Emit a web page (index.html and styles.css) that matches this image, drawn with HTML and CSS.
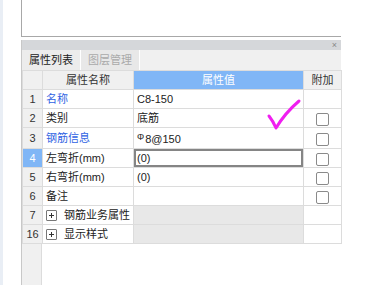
FILE: index.html
```html
<!DOCTYPE html>
<html lang="zh-CN">
<head>
    <meta charset="UTF-8">
    <title>属性列表</title>
    <link rel="stylesheet" href="styles.css">
</head>
<body>
<div class="page">
    <div class="strip"></div>
    <div class="main">
        <div class="top-panel"></div>
        <div class="dock">
            <div class="dock-title"><span class="close">×</span></div>
            <div class="tabs">
                <div class="tab active">属性列表</div>
                <div class="tab">图层管理</div>
            </div>
            <table class="grid">
                <colgroup>
                    <col class="c-num">
                    <col class="c-name">
                    <col class="c-value">
                    <col class="c-extra">
                </colgroup>
                <thead>
                    <tr>
                        <th></th>
                        <th>属性名称</th>
                        <th class="hl">属性值</th>
                        <th>附加</th>
                    </tr>
                </thead>
                <tbody>
                    <tr>
                        <td class="num">1</td>
                        <td class="link">名称</td>
                        <td>C8-150</td>
                        <td></td>
                    </tr>
                    <tr>
                        <td class="num">2</td>
                        <td>类别</td>
                        <td>底筋</td>
                        <td class="chk"><span class="box"></span></td>
                    </tr>
                    <tr>
                        <td class="num">3</td>
                        <td class="link">钢筋信息</td>
                        <td><span class="sym">Φ</span>8@150</td>
                        <td class="chk"><span class="box"></span></td>
                    </tr>
                    <tr>
                        <td class="num hl">4</td>
                        <td>左弯折(mm)</td>
                        <td class="editing">(0)</td>
                        <td class="chk"><span class="box"></span></td>
                    </tr>
                    <tr>
                        <td class="num">5</td>
                        <td>右弯折(mm)</td>
                        <td>(0)</td>
                        <td class="chk"><span class="box"></span></td>
                    </tr>
                    <tr>
                        <td class="num">6</td>
                        <td>备注</td>
                        <td></td>
                        <td class="chk"><span class="box"></span></td>
                    </tr>
                    <tr class="group">
                        <td class="num">7</td>
                        <td><span class="plus"><svg width="9" height="9" viewBox="0 0 9 9"><path d="M2 4.5h5M4.5 2v5" stroke="#333" stroke-width="1"/></svg></span>钢筋业务属性</td>
                        <td class="shade"></td>
                        <td></td>
                    </tr>
                    <tr class="group">
                        <td class="num">16</td>
                        <td><span class="plus"><svg width="9" height="9" viewBox="0 0 9 9"><path d="M2 4.5h5M4.5 2v5" stroke="#333" stroke-width="1"/></svg></span>显示样式</td>
                        <td class="shade"></td>
                        <td></td>
                    </tr>
                </tbody>
            </table>
            <div class="filler"></div>
        </div>
    </div>
    <!-- hand-drawn check mark over the grid -->
    <svg class="mark" width="40" height="36" viewBox="0 0 40 36">
        <path d="M4 19 Q8 24 11 31 Q20 16 34 4" fill="none" stroke="#f01ef0" stroke-width="3" stroke-linecap="round" stroke-linejoin="round"/>
    </svg>
</div>
</body>
</html>
```

FILE: styles.css
```css
body {
    margin: 0;
    font-family: "Liberation Sans", "Noto Sans CJK SC", sans-serif;
    font-size: 11px;
    color: #222;
    background-color: #fff;
}
.page {
    position: relative;
    display: flex;
    height: 285px;
    overflow: hidden;
}
.strip {
    width: 3px;
    background-color: #e9eef5;
}
.main {
    margin-left: 18px;
    width: 320px;
    display: flex;
    flex-direction: column;
}
.top-panel {
    height: 36px;
    border-left: 1px solid #a8a8a8;
    border-bottom: 1px solid #a8a8a8;
}
.dock {
    margin-top: 3px;
    flex: 1;
    display: flex;
    flex-direction: column;
    border-left: 1px solid #c8c8c8;
}
.dock-title {
    height: 10px;
    background-color: #d5d7da;
    display: flex;
    justify-content: flex-end;
    align-items: center;
    padding-right: 4px;
}
.close {
    font-size: 9px;
    line-height: 10px;
    color: #888;
}
.tabs {
    height: 20px;
    display: flex;
    background-color: #f0f0f0;
}
.tab {
    width: 58px;
    line-height: 20px;
    text-align: center;
    font-size: 11px;
    color: #aaa;
    background-color: #e8e8e8;
    border-right: 1px solid #fff;
}
.tab.active {
    color: #222;
    background-color: #ececec;
}
.grid {
    width: 320px;
    border-collapse: collapse;
    table-layout: fixed;
}
.c-num { width: 20px; }
.c-name { width: 91px; }
.c-value { width: 170px; }
.c-extra { width: 38px; }
th, td {
    height: 18px;
    padding: 0 3px;
    border: 1px solid #dcdcdc;
    white-space: nowrap;
    overflow: hidden;
    line-height: 18px;
}
th {
    background-color: #f0f0f0;
    font-weight: normal;
    color: #333;
    text-align: center;
}
th.hl {
    background-color: #80b6f6;
    color: #fff;
}
td.num {
    background-color: #f0f0f0;
    text-align: center;
    color: #333;
    padding: 0;
}
td.num.hl {
    background-color: #80b6f6;
    color: #fff;
}
td.link {
    color: #2f63e3;
}
td.editing {
    box-shadow: inset 0 0 0 2px #858585;
}
td.chk {
    text-align: center;
    padding: 0;
}
.box {
    display: inline-block;
    width: 11px;
    height: 11px;
    border: 1px solid #8a8a8a;
    border-radius: 2px;
    vertical-align: middle;
    background-color: #fff;
}
.sym {
    font-size: 9px;
    vertical-align: 3px;
    margin-right: 1px;
}
td.shade {
    background-color: #e8e8e8;
}
.plus {
    display: inline-block;
    width: 9px;
    height: 9px;
    border: 1px solid #777;
    border-radius: 1px;
    margin-right: 7px;
    vertical-align: -1px;
    line-height: 0;
}
.filler {
    flex: 1;
    width: 19px;
    background-color: #f0f0f0;
    border-right: 1px solid #dcdcdc;
}
.mark {
    position: absolute;
    left: 265px;
    top: 97px;
}
```
